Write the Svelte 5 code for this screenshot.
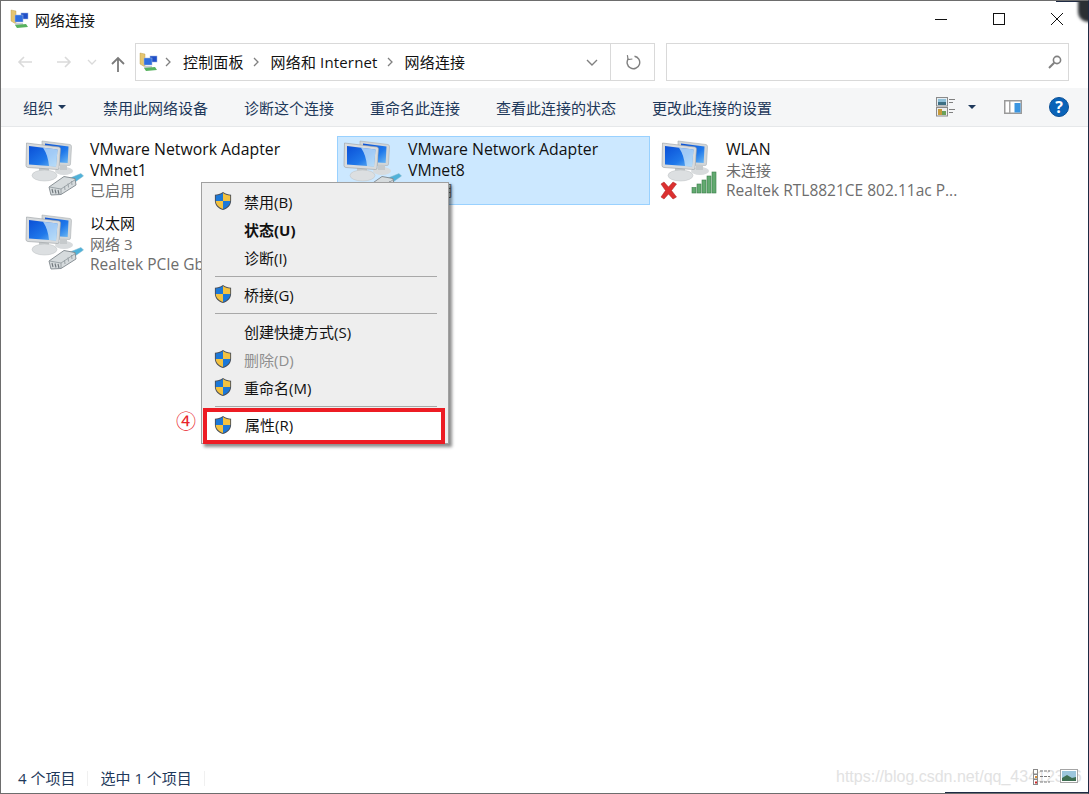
<script>
  const tiles = [
    { name: ['VMware Network Adapter', 'VMnet1'], lines: ['已启用'], kind: 'lan' },
    { name: ['VMware Network Adapter', 'VMnet8'], lines: ['已启用'], kind: 'lan', selected: true },
    { name: ['WLAN'], lines: ['未连接', 'Realtek RTL8821CE 802.11ac P...'], kind: 'wifi' },
    { name: ['以太网'], lines: ['网络 3', 'Realtek PCIe GbE'], kind: 'lan' }
  ];
  const isLatin = (s) => /^[\x20-\x7e]+$/.test(s);
  const commands = ['禁用此网络设备', '诊断这个连接', '重命名此连接', '查看此连接的状态', '更改此连接的设置'];
  const menu = [
    { label: '禁用(B)', shield: true },
    { label: '状态(U)', bold: true },
    { label: '诊断(I)' },
    { sep: true },
    { label: '桥接(G)', shield: true },
    { sep: true },
    { label: '创建快捷方式(S)' },
    { label: '删除(D)', shield: true, disabled: true },
    { label: '重命名(M)', shield: true },
    { sep: true },
    { label: '属性(R)', shield: true, boxed: true }
  ];
  const crumbs = ['控制面板', '网络和 Internet', '网络连接'];
</script>

{#snippet network(kind)}
  <svg class="net" viewBox="0 0 60 60" width="60" height="60" aria-hidden="true">
    <!-- back monitor -->
    <path d="M18 1 L46 4.5 Q47.5 5 47.5 6.5 L46.5 24 Q46.5 25.5 45 25.5 L30 25 L18 20 Z" fill="#d2d6d8" stroke="#a9aeb2" stroke-width=".6"/>
    <path d="M21 3.5 L44.5 6.5 L43.7 23 L36 22.5 L36 9 L21 7 Z" fill="url(#scr)"/>
    <ellipse cx="40" cy="31" rx="9" ry="4" fill="#d8dbdd"/>
    <path d="M36 25 h7 v5 h-7 Z" fill="#c6cacc"/>
    <!-- front stand -->
    <path d="M15 28 h10 v6 h-10 Z" fill="#c4c8ca"/>
    <ellipse cx="20.5" cy="35.5" rx="12.5" ry="5.5" fill="#dcdfe1" stroke="#bcc0c3" stroke-width=".5"/>
    <!-- front monitor -->
    <path d="M2.5 3 L35 7 Q36.5 7.3 36.5 9 L35 28 Q35 29.5 33.5 29.5 L4 27.5 Q2 27.3 2 25.5 Z" fill="#d8dbdd" stroke="#9a9fa3" stroke-width=".6"/>
    <path d="M5 6 L33.5 9.5 L32 26.5 L5 24.5 Z" fill="url(#scr)"/>
    <path d="M19 7.7 L33.5 9.5 L32 26.5 L25 26 Q24 15 19 7.7 Z" fill="#d6ecfb" opacity=".72"/>
    {#if kind === 'lan'}
      <path d="M46 38 L57 33.5 L59.5 36 L51 42 Z" fill="#4fb2da" stroke="#8db9ca" stroke-width=".5"/>
      <path d="M25 47 L40 36.5 L51 38.5 L52 45 L37 54.5 L27 55 Z" fill="#d6dbdd" stroke="#7f878c" stroke-width=".9"/>
      <path d="M25.5 47 L37 49 L51.5 39.5 M37 49 L37 54" fill="none" stroke="#8d959a" stroke-width=".8"/>
      <path d="M28 49 L29 53 M31 49.5 L32 53.5 M34 50 L35 54" stroke="#6f777c" stroke-width="1.1"/>
      <path d="M40.5 46 L41 50 M44 43.5 L44.5 47.5 M47.5 41 L48 45" stroke="#9aa2a7" stroke-width="1"/>
    {:else}
      <g fill="#62aa70" stroke="#3c7d4c" stroke-width=".6">
        <rect x="32" y="47.5" width="4" height="5.5"/>
        <rect x="37" y="44" width="4" height="9"/>
        <rect x="42" y="40" width="4" height="13"/>
        <rect x="47" y="36" width="4" height="17"/>
        <rect x="52" y="32" width="4" height="21"/>
      </g>
      <path d="M1 44 L4 42 L8.5 47 L13 42 L16.5 44 L11.5 50.5 L16.5 57 L13 59 L8.5 54 L4 59 L1 57 L5.5 50.5 Z" fill="#dc3030" stroke="#a82020" stroke-width=".5"/>
    {/if}
  </svg>
{/snippet}

{#snippet netfolder()}
  <svg viewBox="0 0 20 20" width="20" height="20" aria-hidden="true">
    <path d="M1 1 L6 2 L6 15 L1 12 Z" fill="#e6c670" stroke="#b4963f" stroke-width=".4"/>
    <rect x="11" y="4" width="7" height="6" fill="#1f4fc8" stroke="#9db2e0" stroke-width=".5"/>
    <rect x="5" y="6" width="8" height="7" fill="#2f6fe0" stroke="#a8b8d8" stroke-width=".5"/>
    <path d="M5 14 h8 v2 h-8 Z" fill="#c9cdd0"/>
    <path d="M5 16 L16 15 L18 18 L7 19 Z" fill="#57b25e"/>
  </svg>
{/snippet}

{#snippet shield()}
  <svg class="shield" viewBox="0 0 20 22" width="18" height="20" aria-hidden="true">
    <path d="M10 1 C7 3 4 4 1 4 L1 11 C1 16 5 19.5 10 21 C15 19.5 19 16 19 11 L19 4 C16 4 13 3 10 1 Z" fill="#4a4f58"/>
    <path d="M10 2.2 V11 H2 V5 C5 5 8 4 10 2.2 Z" fill="#1c78d8"/>
    <path d="M10 2.2 C12 4 15 5 18 5 V11 H10 Z" fill="#f3c240"/>
    <path d="M2 11 H10 V19.9 C6 18.4 2 15.5 2 11 Z" fill="#f3c240"/>
    <path d="M10 11 H18 C18 15.5 14 18.4 10 19.9 Z" fill="#1c78d8"/>
  </svg>
{/snippet}

<svg class="defs" width="0" height="0" aria-hidden="true">
  <defs>
    <linearGradient id="scr" x1="0" y1="0" x2="1" y2="1">
      <stop offset="0" stop-color="#0a4fd6"/>
      <stop offset=".6" stop-color="#1f78ea"/>
      <stop offset="1" stop-color="#6db8f2"/>
    </linearGradient>
  </defs>
</svg>

<div class="window">
  <header class="title">
    {@render netfolder()}
    <span class="title-text">网络连接</span>
    <div class="caption">
      <svg viewBox="0 0 12 12" width="12" height="12"><path d="M0 6.5 H12" stroke="#111" stroke-width="1"/></svg>
      <svg viewBox="0 0 12 12" width="12" height="12"><rect x=".5" y=".5" width="11" height="11" fill="none" stroke="#111"/></svg>
      <svg viewBox="0 0 12 12" width="12" height="12"><path d="M0 0 L12 12 M12 0 L0 12" stroke="#111" stroke-width="1"/></svg>
    </div>
  </header>

  <nav class="addressrow">
    <div class="navbtns">
      <svg viewBox="0 0 16 14" width="16" height="14"><path d="M15 7 H2 M7 2 L2 7 L7 12" fill="none" stroke="#dadada" stroke-width="1.6"/></svg>
      <svg viewBox="0 0 16 14" width="16" height="14"><path d="M1 7 H14 M9 2 L14 7 L9 12" fill="none" stroke="#dadada" stroke-width="1.6"/></svg>
      <svg viewBox="0 0 10 6" width="10" height="6"><path d="M1 1 L5 5 L9 1" fill="none" stroke="#dadada" stroke-width="1.3"/></svg>
      <svg viewBox="0 0 14 16" width="14" height="16"><path d="M7 16 V2 M1 8 L7 2 L13 8" fill="none" stroke="#7a7a7a" stroke-width="1.8"/></svg>
    </div>
    <div class="address">
      {@render netfolder()}
      {#each crumbs as c}
        <svg class="crumb-sep" viewBox="0 0 6 10" width="6" height="10"><path d="M1 1 L5 5 L1 9" fill="none" stroke="#808080" stroke-width="1.3"/></svg>
        <span class="crumb">{c}</span>
      {/each}
      <svg class="drop" viewBox="0 0 12 7" width="12" height="7"><path d="M1 1 L6 6 L11 1" fill="none" stroke="#808080" stroke-width="1.4"/></svg>
      <div class="refresh">
        <svg viewBox="0 0 16 16" width="16" height="16"><path d="M9.5 2.2 A6.3 6.3 0 1 1 3.4 4.6" fill="none" stroke="#808080" stroke-width="1.4"/><path d="M2.8 1 V5.6 H7.2" fill="none" stroke="#808080" stroke-width="1.2" transform="rotate(-8 3 4)"/></svg>
      </div>
    </div>
    <div class="search">
      <svg viewBox="0 0 14 14" width="14" height="14"><circle cx="9" cy="5" r="3.6" fill="none" stroke="#808080" stroke-width="1.6"/><path d="M6.2 7.8 L1 13" stroke="#808080" stroke-width="2"/></svg>
    </div>
  </nav>

  <div class="toolbar">
    <button class="cmd org">组织<i class="caret"></i></button>
    {#each commands as c}
      <button class="cmd">{c}</button>
    {/each}
    <div class="tools">
      <svg class="viewicon" viewBox="0 0 20 20" width="20" height="20">
        <rect x=".5" y=".5" width="11" height="8.5" fill="#e4edf3" stroke="#8a8a8a"/><rect x="2" y="2" width="8" height="3" fill="#8fc0d8"/><rect x="2" y="5" width="8" height="3" fill="#3e7084"/>
        <rect x=".5" y="10.5" width="11" height="8.5" fill="#eee" stroke="#8a8a8a"/><rect x="2" y="12" width="4" height="6" fill="#c79a3a"/><rect x="6" y="14" width="4" height="4" fill="#6aa05a"/>
        <path d="M13 2.5 H19 M13 5.5 H17 M13 12.5 H19 M13 15.5 H17" stroke="#808080"/>
      </svg>
      <i class="caret view"></i>
      <svg class="pane" viewBox="0 0 18 14" width="18" height="14"><rect x=".75" y=".75" width="16.5" height="12.5" fill="#fff" stroke="#9a9a9a" stroke-width="1.5"/><rect x="5" y="1" width="1.5" height="12" fill="#a5a5a5"/><rect x="10.5" y="3" width="6" height="9.5" fill="#3a95e0"/></svg>
      <span class="help">?</span>
    </div>
  </div>

  <main class="content">
    <div class="tiles">
      {#each tiles as t}
        <div class="tile" class:selected={t.selected}>
          {@render network(t.kind)}
          <div class="info">
            {#each t.name as n}<div class="name" class:latin={isLatin(n)}>{n}</div>{/each}
            {#each t.lines as l}<div class="sub" class:latin={isLatin(l)}>{l}</div>{/each}
          </div>
        </div>
      {/each}
    </div>

    <span class="marker">④</span>
    <div class="menu">
      {#each menu as m}
        {#if m.sep}
          <div class="sep"></div>
        {:else}
          <div class="item" class:bold={m.bold} class:disabled={m.disabled} class:boxed={m.boxed}>
            <span class="slot">{#if m.shield}{@render shield()}{/if}</span>
            <span>{m.label}</span>
          </div>
        {/if}
      {/each}
    </div>
  </main>

  <footer class="status">
    <span class="count">4 个项目</span>
    <span class="count second">选中 1 个项目</span>
    <span class="watermark">https://blog.csdn.net/qq_43412356</span>
    <div class="modes">
      <svg viewBox="0 0 18 16" width="18" height="16">
        <g fill="#fff" stroke="#8a8a8a"><rect x=".5" y=".5" width="4" height="4.5"/><rect x=".5" y="5.5" width="4" height="4.5"/><rect x=".5" y="10.5" width="4" height="5"/></g>
        <rect x="2" y="7" width="2" height="2" fill="#d9903a"/><rect x="2" y="12.5" width="2" height="2" fill="#d02a2a"/>
        <path d="M7 2 H17 M7 7.5 H17 M7 13 H17" stroke="#7a7a7a" stroke-dasharray="3 1"/>
      </svg>
      <svg viewBox="0 0 18 14" width="18" height="14"><rect x=".5" y=".5" width="17" height="13" fill="#fff" stroke="#a5a5a5"/><rect x="2" y="2" width="14" height="10" fill="#9cc6dc"/><path d="M2 9 L7 6 L12 9 L16 8 V12 H2 Z" fill="#3e6f52"/></svg>
    </div>
  </footer>

  <i class="edge top"></i>
  <i class="edge bottom"></i>
  <i class="corner"></i>
</div>

<style>
  :global(body) {
    margin: 0;
    background: #fff;
  }
  .defs { position: absolute; }
  .window {
    position: relative;
    width: 1089px;
    height: 794px;
    box-sizing: border-box;
    border: 1px solid #6d6d6d;
    border-right-color: #1e2a44;
    display: flex;
    flex-direction: column;
    font-family: "Open Sans", "Noto Sans CJK SC", sans-serif;
    font-size: 15px;
    color: #111;
    overflow: hidden;
    background: #fff;
  }
  .edge {
    position: absolute;
    right: 0;
    height: 1px;
    background: #1e2a44;
  }
  .edge.top { top: 0; width: 32px; }
  .edge.bottom { bottom: 0; width: 143px; }
  .corner {
    position: absolute;
    right: -6px;
    top: -6px;
    width: 16px;
    height: 27px;
    background: #2b2f33;
    border-bottom-left-radius: 10px;
    filter: blur(1.5px);
  }
  .title {
    height: 38px;
    flex: none;
    display: flex;
    align-items: center;
    padding: 0 0 2px 9px;
    box-sizing: border-box;
    gap: 5px;
  }
  .title-text { font-size: 15px; }
  .caption {
    margin-left: auto;
    display: flex;
    gap: 46px;
    padding-right: 25px;
  }

  .addressrow {
    height: 49px;
    flex: none;
    display: flex;
    align-items: flex-start;
    padding-top: 4px;
    box-sizing: border-box;
  }
  .navbtns {
    width: 134px;
    height: 38px;
    flex: none;
    display: flex;
    align-items: center;
    padding-left: 16px;
    box-sizing: border-box;
  }
  .navbtns svg:nth-child(1) { margin-right: 23px; }
  .navbtns svg:nth-child(2) { margin-right: 15px; }
  .navbtns svg:nth-child(3) { margin-right: 14px; }
  .navbtns svg:nth-child(4) { margin-top: 3px; }
  .address {
    width: 520px;
    height: 38px;
    box-sizing: border-box;
    border: 1px solid #d9d9d9;
    display: flex;
    align-items: center;
    padding-left: 3px;
    flex: none;
  }
  .crumb-sep { margin: 0 12px 0 9px; }
  .address > svg:nth-child(2) { margin-left: 6px; margin-right: 12px; }
  .crumb {
    white-space: nowrap;
    font-size: 15px;
    margin-top: -2px;
    letter-spacing: .15px;
  }
  .drop { margin-left: auto; margin-right: 12px; }
  .refresh {
    width: 43px;
    height: 100%;
    border-left: 1px solid #d9d9d9;
    display: flex;
    align-items: center;
    justify-content: center;
    flex: none;
  }
  .search {
    width: 403px;
    height: 38px;
    margin-left: 11px;
    box-sizing: border-box;
    border: 1px solid #d9d9d9;
    display: flex;
    align-items: center;
    justify-content: flex-end;
    padding-right: 6px;
    flex: none;
  }

  .toolbar {
    height: 39px;
    flex: none;
    box-sizing: border-box;
    background: #f5f6f7;
    border-bottom: 1px solid #e6e8ea;
    display: flex;
    align-items: center;
    padding-left: 23px;
    gap: 36px;
  }
  .cmd {
    all: unset;
    color: #1e395b;
    font-size: 15px;
    display: flex;
    align-items: center;
    white-space: nowrap;
  }
  .org { margin: 0 1px 0 -1px; }
  .caret {
    display: inline-block;
    width: 0;
    height: 0;
    border-left: 4px solid transparent;
    border-right: 4px solid transparent;
    border-top: 4px solid #1e395b;
    margin-left: 5px;
  }
  .tools {
    margin-left: auto;
    display: flex;
    align-items: center;
    padding-right: 19px;
  }
  .caret.view { margin: 0 0 0 12px; }
  .pane { margin-left: 28px; }
  .help {
    margin-left: 27px;
    width: 20px;
    height: 20px;
    box-sizing: border-box;
    border: 1px solid #0a4f96;
    border-radius: 50%;
    background: #0a63b8;
    color: #fff;
    font-weight: 700;
    font-size: 16px;
    line-height: 18px;
    text-align: center;
  }

  .content {
    flex: 1;
    position: relative;
    min-height: 0;
  }
  .tiles {
    display: grid;
    grid-template-columns: repeat(3, 313px);
    grid-auto-rows: 69px;
    column-gap: 5px;
    row-gap: 5px;
    padding: 9px 0 0 18px;
  }
  .tile {
    box-sizing: border-box;
    border: 1px solid transparent;
    display: flex;
    gap: 6px;
    padding: 1px 0 0 4px;
    overflow: hidden;
    white-space: nowrap;
    height: 69px;
  }
  .tile.selected {
    background: #cce8ff;
    border-color: #99d1ff;
  }
  .net { flex: none; margin-top: 2px; }
  .info {
    line-height: 20.5px;
    font-size: 15px;
    color: #111;
    padding-top: 1px;
  }
  .name.latin { font-size: 15.8px; }
  .sub { color: #6d6d6d; }
  .sub.latin { font-size: 15.5px; }

  .marker {
    position: absolute;
    left: 175px;
    top: 283px;
    color: #e8232a;
    font-size: 20px;
    line-height: 24px;
  }
  .menu {
    position: absolute;
    left: 200px;
    top: 55px;
    width: 248px;
    height: 262px;
    box-sizing: border-box;
    background: #eeeeee;
    border: 1px solid #a0a0a0;
    box-shadow: 3px 3px 3px rgba(0, 0, 0, .45);
    padding: 4px 2px;
    font-size: 15px;
  }
  .item {
    height: 28px;
    display: flex;
    align-items: center;
    position: relative;
  }
  .slot {
    width: 40px;
    flex: none;
    display: flex;
    padding-left: 10px;
    box-sizing: border-box;
  }
  .bold { font-weight: 700; }
  .disabled { color: #8f8f8f; }
  .sep {
    height: 1px;
    background: #a8a8a8;
    margin: 5px 9px 3px 11px;
  }
  .boxed {
    background: #fff;
    outline: 4px solid #ed1c24;
    outline-offset: -2px;
    height: 32px;
    box-sizing: border-box;
    padding-bottom: 3px;
    margin: 1px 0 0 1px;
    width: 238px;
  }
  .boxed .slot { padding-left: 9px; }

  .status {
    height: 32px;
    flex: none;
    box-sizing: border-box;
    padding: 2px 0 0 17px;
    display: flex;
    align-items: center;
    color: #1e395b;
    font-size: 15px;
    position: relative;
  }
  .count { padding-right: 12px; border-right: 1px solid #f0f0f0; line-height: 15px; }
  .second { margin-left: 12px; }
  .watermark {
    position: absolute;
    left: 835px;
    top: 7px;
    color: #e2e2e2;
    font-family: "Liberation Sans", sans-serif;
    font-size: 16px;
    white-space: nowrap;
  }
  .modes {
    position: absolute;
    right: 10px;
    top: 8px;
    display: flex;
    gap: 9px;
  }
</style>
